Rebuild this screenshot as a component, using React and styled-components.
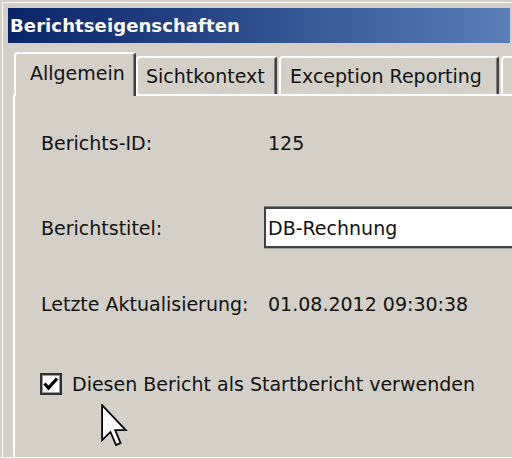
import React from "react";
import styled, { createGlobalStyle } from "styled-components";

const GlobalStyle = createGlobalStyle`
  html, body { margin: 0; padding: 0; background: #d4d0c8; overflow: hidden; }
  #root { width: 512px; height: 459px; }
`;

const Frame = styled.div`
  position: relative;
  width: 512px;
  height: 458px;
  box-sizing: border-box;
  padding: 2px 0 0 2px;
  background: #d4d0c8;
  border-bottom: 1px solid #ffffff;
  overflow: hidden;
  font-family: "DejaVu Sans", Verdana, sans-serif;
  color: #111;
`;

const Window = styled.div`
  height: 100%;
  box-sizing: border-box;
  border-top: 1px solid #ffffff;
  border-left: 1px solid #ffffff;
  padding: 5px 0 0 5px;
  display: flex;
  flex-direction: column;
`;

const TitleBar = styled.div`
  height: 35px;
  margin-right: 2px;
  display: flex;
  align-items: center;
  padding-left: 2px;
  background: linear-gradient(to right, #0a246a 0%, #2c4a8a 45%, #5a7eb8 100%);
  color: #ffffff;
  font-weight: bold;
  font-size: 18px;
  letter-spacing: 0.1px;
`;

const TabArea = styled.div`
  margin-top: 9px;
  margin-left: 5px;
  flex: 1;
  display: flex;
  flex-direction: column;
`;

const TabStrip = styled.div`
  display: flex;
  align-items: flex-end;
  height: 42px;
`;

const Tab = styled.div`
  position: relative;
  z-index: ${(p) => (p.$active ? 1 : 0)};
  flex: none;
  box-sizing: border-box;
  width: ${(p) => p.$w}px;
  height: ${(p) => (p.$active ? 44 : 38)}px;
  margin-left: ${(p) => p.$ml}px;
  margin-bottom: ${(p) => (p.$active ? -2 : 0)}px;
  background: #d4d0c8;
  border-top: 2px solid #ffffff;
  border-left: 2px solid #ffffff;
  border-right: 2px solid #404040;
  border-top-left-radius: 4px;
  border-top-right-radius: 3px;
  box-shadow: inset -1px 0 0 #808080;
  display: flex;
  align-items: center;
  padding-left: ${(p) => p.$pl}px;
  padding-bottom: ${(p) => (p.$active ? 4 : 0)}px;
  font-size: 19px;
  white-space: nowrap;
  overflow: hidden;
`;

const Panel = styled.div`
  flex: 1;
  border-top: 2px solid #ffffff;
  border-left: 2px solid #ffffff;
  padding: 35px 0 0 26px;
  display: flex;
  flex-direction: column;
  font-size: 19px;
`;

const Row = styled.div`
  display: grid;
  grid-template-columns: 223px 1fr;
  align-items: center;
  margin-top: ${(p) => p.$top}px;
  line-height: 24px;
  white-space: nowrap;
`;

const Label = styled.span``;

const Value = styled.span`
  padding-left: 4px;
`;

const TextBox = styled.div`
  box-sizing: border-box;
  width: 270px;
  height: 41px;
  background: #ffffff;
  border-top: 2px solid #404040;
  border-left: 2px solid #404040;
  border-bottom: 2px solid #404040;
  box-shadow: 0 -1px 0 #808080, 0 1px 0 #a0a0a0;
  display: flex;
  align-items: center;
  padding-left: 2px;
`;

const CheckRow = styled.label`
  display: flex;
  align-items: center;
  gap: 10px;
  margin-top: ${(p) => p.$top}px;
  margin-left: -1px;
  line-height: 24px;
  white-space: nowrap;
`;

const CheckBox = styled.span`
  box-sizing: border-box;
  width: 22px;
  height: 22px;
  background: #ffffff;
  border: 2px solid #303030;
  box-shadow: inset 0 0 0 1px #9a9a9a;
  display: flex;
  align-items: center;
  justify-content: center;
`;

const Cursor = styled.svg`
  position: absolute;
  left: 101px;
  top: 404px;
`;

export default function App() {
  return (
    <>
      <GlobalStyle />
      <Frame>
        <Window>
          <TitleBar>Berichtseigenschaften</TitleBar>
          <TabArea>
            <TabStrip>
              <Tab $active $w={122} $ml={1} $pl={14}>Allgemein</Tab>
              <Tab $w={141} $ml={0} $pl={8}>Sichtkontext</Tab>
              <Tab $w={220} $ml={2} $pl={9}>Exception Reporting</Tab>
              <Tab $w={40} $ml={2} $pl={8}></Tab>
            </TabStrip>
            <Panel>
              <Row $top={0}>
                <Label>Berichts-ID:</Label>
                <Value>125</Value>
              </Row>
              <Row $top={52}>
                <Label>Berichtstitel:</Label>
                <TextBox>DB-Rechnung</TextBox>
              </Row>
              <Row $top={44}>
                <Label>Letzte Aktualisierung:</Label>
                <Value>01.08.2012 09:30:38</Value>
              </Row>
              <CheckRow $top={56}>
                <CheckBox>
                  <svg width="16" height="16" viewBox="0 0 16 16">
                    <path d="M1.5 7.5 L5.5 12 L14 2.5" fill="none" stroke="#000" strokeWidth="3.2" strokeLinejoin="miter" />
                  </svg>
                </CheckBox>
                Diesen Bericht als Startbericht verwenden
              </CheckRow>
            </Panel>
          </TabArea>
        </Window>
        <Cursor width="27" height="44" viewBox="0 0 12 19.5">
          <path
            d="M0.5 0.5 L0.5 16 L4.2 12.4 L6.7 18.2 L8.7 17.3 L6.3 11.6 L11 11.6 Z"
            fill="#ffffff"
            stroke="#000000"
            strokeWidth="0.8"
            strokeLinejoin="miter"
          />
        </Cursor>
      </Frame>
    </>
  );
}
